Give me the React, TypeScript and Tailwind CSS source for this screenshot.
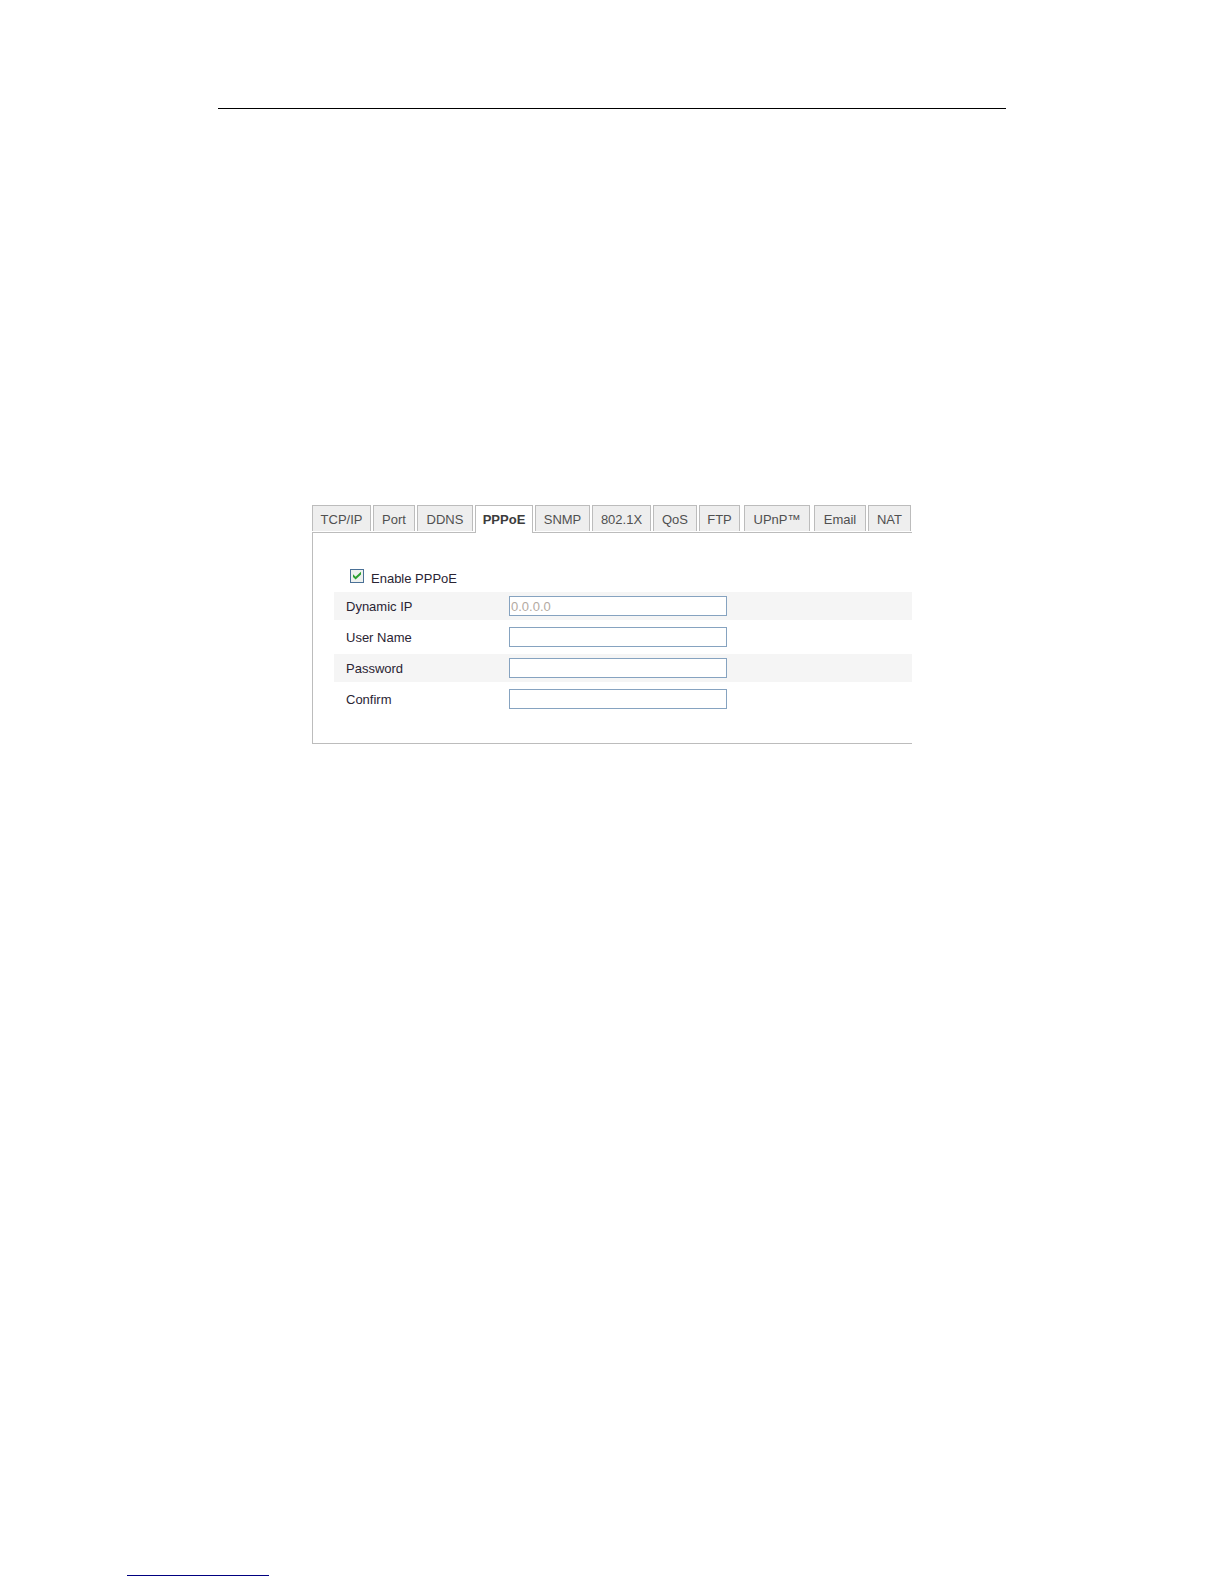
import { useState } from "react";

const tabs = [
  { name: "TCP/IP", size: "w-[59px] mr-[2px]" },
  { name: "Port", size: "w-[42px] mr-[2px]" },
  { name: "DDNS", size: "w-[56px] mr-[2px]" },
  { name: "PPPoE", size: "w-[58px] mr-[2px]" },
  { name: "SNMP", size: "w-[55px] mr-[2px]" },
  { name: "802.1X", size: "w-[59px] mr-[2px]" },
  { name: "QoS", size: "w-[44px] mr-[2px]" },
  { name: "FTP", size: "w-[41px] mr-1" },
  { name: "UPnP™", size: "w-[66px] mr-1" },
  { name: "Email", size: "w-[52px] mr-[2px]" },
  { name: "NAT", size: "w-[43px]" },
];

const fields = [
  { id: "dynamic-ip", label: "Dynamic IP", type: "text", value: "0.0.0.0", disabled: true },
  { id: "user-name", label: "User Name", type: "text", value: "", disabled: false },
  { id: "password", label: "Password", type: "password", value: "", disabled: false },
  { id: "confirm", label: "Confirm", type: "password", value: "", disabled: false },
];

export default function App() {
  const [active, setActive] = useState("PPPoE");
  const [enabled, setEnabled] = useState(true);

  return (
    <div className="flex min-h-screen flex-col bg-white font-['Liberation_Sans',Arial,sans-serif] text-[13px] leading-4 text-[#2a2433]">
      <main className="mx-auto w-full max-w-[788px] pt-[108px]">
        <hr className="border-t border-black" />

        <section className="mx-[94px] mt-[396px]">
          {/* Network tabs */}
          <div
            role="tablist"
            className="flex items-start border-b border-[#bcbcbc]"
          >
            {tabs.map((tab) => (
              <button
                key={tab.name}
                type="button"
                role="tab"
                aria-selected={active === tab.name}
                onClick={() => setActive(tab.name)}
                className={`shrink-0 border border-b-0 border-[#bcbcbc] text-center whitespace-nowrap ${tab.size} ${
                  active === tab.name
                    ? "-mb-px h-7 bg-white font-bold text-[#3c3c3c]"
                    : "mb-px h-[26px] bg-[#eeeeee] pt-[2px] text-[#505050]"
                }`}
              >
                {tab.name}
              </button>
            ))}
          </div>

          {/* PPPoE settings */}
          <form className="border-b border-l border-[#bcbcbc] pt-9 pb-[27px] pl-[21px]">
            <div className="flex h-[23px] items-start pl-4">
              <span className="grid">
                <input
                  id="enable-pppoe"
                  type="checkbox"
                  checked={enabled}
                  onChange={(e) => setEnabled(e.target.checked)}
                  className="col-start-1 row-start-1 size-[14px] appearance-none border border-[#4a7096] bg-[#eef1ee]"
                />
                {enabled && (
                  <svg
                    viewBox="0 0 14 14"
                    className="pointer-events-none col-start-1 row-start-1 size-[14px]"
                  >
                    <path
                      d="M3 5.2 L3 8 L5.6 10.6 L11 5.4 L11 2.8 L5.6 7.8 Z"
                      fill="#2ba02f"
                    />
                  </svg>
                )}
              </span>
              <label htmlFor="enable-pppoe" className="pt-[2px] pl-[7px]">
                Enable PPPoE
              </label>
            </div>

            {fields.map((field) => (
              <div
                key={field.id}
                className="flex items-center pl-3 odd:h-[34px] even:h-7 even:bg-[#f5f5f5]"
              >
                <label htmlFor={field.id} className="w-[163px] shrink-0 pt-[2px]">
                  {field.label}
                </label>
                <input
                  id={field.id}
                  type={field.type}
                  defaultValue={field.value}
                  disabled={field.disabled}
                  className="h-5 w-[218px] border border-[#86a3c0] bg-white px-px disabled:text-[#b3aaa2]"
                />
              </div>
            ))}
          </form>
        </section>
      </main>

      <footer className="mt-auto pb-2 pl-[127px]">
        <hr className="w-[142px] border-t border-[#000080]" />
      </footer>
    </div>
  );
}
